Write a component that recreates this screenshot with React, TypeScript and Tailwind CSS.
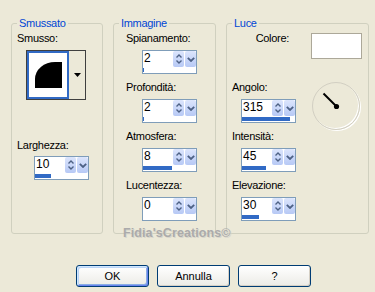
import React from 'react';

// spinner field: number box, up/down button, dropdown button, progress bar
function Spinner({ value, bar }: { value: string; bar: number }) {
  return (
    <div className="w-[55px] h-[24px] border border-[#7F9DB9] bg-white flex flex-col">
      <div className="flex h-[16px]">
        <span className="flex-1 pl-[1px] text-[12px] leading-[12px] pt-[1px]">{value}</span>
        <div className="w-[11px] h-full rounded-[2px] bg-gradient-to-b from-[#DCE5FC] to-[#B7C9F5] flex flex-col items-center justify-center gap-[2px]">
          <svg width="6" height="4" viewBox="0 0 6 4">
            <path d="M0.5 3.5 L3 1 L5.5 3.5" fill="none" stroke="#4D6185" strokeWidth="1.4" />
          </svg>
          <svg width="6" height="4" viewBox="0 0 6 4">
            <path d="M0.5 0.5 L3 3 L5.5 0.5" fill="none" stroke="#4D6185" strokeWidth="1.4" />
          </svg>
        </div>
        <div className="w-[11px] ml-[1px] h-full rounded-[2px] bg-gradient-to-b from-[#DCE5FC] to-[#B7C9F5] flex items-center justify-center">
          <svg width="8" height="5" viewBox="0 0 8 5">
            <path d="M0.8 0.8 L4 4 L7.2 0.8" fill="none" stroke="#4D6185" strokeWidth="1.8" />
          </svg>
        </div>
      </div>
      <div className="flex-1 flex items-center">
        <div className="h-[4px] bg-[#316AC5]" style={{ width: bar }} />
      </div>
    </div>
  );
}

function Group({ title, className, children }: { title: string; className: string; children: React.ReactNode }) {
  return (
    <div className={`relative h-[211px] border border-[#D0D0BF] rounded-[3px] ${className}`}>
      <span className="absolute -top-[7px] left-[5px] px-[2px] bg-[#ECE9D8] text-[#0046D5] tracking-[-0.3px]">
        {title}
      </span>
      {children}
    </div>
  );
}

function Label({ children, className = '' }: { children: React.ReactNode; className?: string }) {
  return <div className={`tracking-[-0.3px] ${className}`}>{children}</div>;
}

function Dial() {
  return (
    <div className="w-[48px] h-[48px] rounded-full border border-[#D2CFC2] shadow-[inset_-1px_-1px_0_#ffffff,1px_1px_0_#ffffff]">
      <svg width="46" height="46" viewBox="0 0 46 46">
        <line x1="10.5" y1="10.5" x2="23.5" y2="23.5" stroke="#000" strokeWidth="2" />
        <circle cx="23.5" cy="23.5" r="2.6" fill="#000" />
      </svg>
    </div>
  );
}

function XPButton({ label, focused = false }: { label: string; focused?: boolean }) {
  return (
    <button
      className={`w-[73px] h-[22px] border border-[#003C74] rounded-[3px] bg-gradient-to-b from-white to-[#ECEBE6] text-[11px] leading-[13px] ${
        focused
          ? 'shadow-[inset_1px_1px_0_#CEE7FF,inset_-1px_-1px_0_#6982EE,inset_2px_2px_0_#BCD4F6,inset_-2px_-2px_0_#89ADE4]'
          : 'shadow-[inset_-1px_-1px_0_#D6D0C5]'
      }`}
    >
      {label}
    </button>
  );
}

export default function App() {
  return (
    <div className="relative w-[375px] h-[292px] overflow-hidden bg-[#ECE9D8] text-black text-[11px] leading-[13px] font-['Liberation_Sans',Arial,sans-serif] pt-[23px] pl-[11px]">
      <div className="flex gap-[10px]">
        {/* Smussato */}
        <Group title="Smussato" className="w-[92px] pt-[8px] pl-[5px]">
          <Label>Smusso:</Label>
          <div className="ml-[9px] mt-[5px] w-[60px] h-[50px] border border-[#3F3F3F] flex">
            <div className="w-[42px] border-2 border-[#316AC5] bg-white flex items-center justify-center">
              <div className="w-[27px] h-[26px] bg-black rounded-tl-[20px_17px]" />
            </div>
            <div className="flex-1 flex items-center justify-center">
              <svg width="7" height="4" viewBox="0 0 7 4">
                <polygon points="0,0 7,0 3.5,4" fill="#000" />
              </svg>
            </div>
          </div>
          <Label className="mt-[39px]">Larghezza:</Label>
          <div className="ml-[17px] mt-[4px]">
            <Spinner value="10" bar={16} />
          </div>
        </Group>

        {/* Immagine */}
        <Group title="Immagine" className="w-[103px] pt-[8px] pl-[12px]">
          <Label>Spianamento:</Label>
          <div className="ml-[16px] mt-[5px]">
            <Spinner value="2" bar={1} />
          </div>
          <Label className="mt-[7px]">Profondità:</Label>
          <div className="ml-[16px] mt-[5px]">
            <Spinner value="2" bar={1} />
          </div>
          <Label className="mt-[7px]">Atmosfera:</Label>
          <div className="ml-[16px] mt-[5px]">
            <Spinner value="8" bar={29} />
          </div>
          <Label className="mt-[7px]">Lucentezza:</Label>
          <div className="ml-[16px] mt-[5px]">
            <Spinner value="0" bar={0} />
          </div>
        </Group>

        {/* Luce */}
        <Group title="Luce" className="w-[143px] pt-[8px] pl-[5px]">
          <div className="flex items-start">
            <Label className="w-[57px] text-right">Colore:</Label>
            <div className="ml-[22px] mt-[1px] w-[51px] h-[26px] bg-white border border-[#ACA899]" />
          </div>
          <div className="flex items-start mt-[22px]">
            <div className="w-[64px]">
              <Label>Angolo:</Label>
              <div className="ml-[9px] mt-[5px]">
                <Spinner value="315" bar={48} />
              </div>
              <Label className="mt-[7px]">Intensità:</Label>
              <div className="ml-[9px] mt-[5px]">
                <Spinner value="45" bar={24} />
              </div>
              <Label className="mt-[7px]">Elevazione:</Label>
              <div className="ml-[9px] mt-[5px]">
                <Spinner value="30" bar={17} />
              </div>
            </div>
            <div className="ml-[16px] mt-[1px]">
              <Dial />
            </div>
          </div>
        </Group>
      </div>

      <div className="flex gap-[8px] ml-[65px] mt-[31px]">
        <XPButton label="OK" focused />
        <XPButton label="Annulla" />
        <XPButton label="?" />
      </div>

      {/* watermark */}
      <div className="absolute left-[123px] top-[226px] text-[12.5px] leading-[14px] font-bold tracking-[0.1px] text-[#ABABAB] [text-shadow:1px_1px_0_#D8D6CC]">
        Fidia'sCreations©
      </div>
    </div>
  );
}
